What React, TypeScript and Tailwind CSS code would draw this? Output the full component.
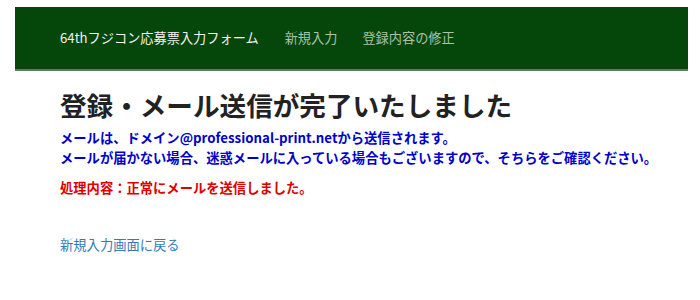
import React from "react";

const font = { fontFamily: '"Noto Sans CJK JP", "Noto Sans", sans-serif' };

function Navbar() {
  return (
    <nav className="ml-[15px] mr-[12px] mt-[7px] flex h-[64px] items-center border-b-2 border-[#5f7a5f] bg-[#05470a] pl-[45px]">
      <a className="text-[13.2px] text-[#f2f2f2]">64thフジコン応募票入力フォーム</a>
      <ul className="ml-[26px] flex gap-[25px] text-[13.2px] text-[#a9c2a9]">
        <li>新規入力</li>
        <li>登録内容の修正</li>
      </ul>
    </nav>
  );
}

export default function App() {
  return (
    <div className="h-[300px] w-[700px] bg-white" style={font}>
      <Navbar />
      <main className="pl-[60px] pt-[16px]">
        <h1 className="text-[26.6px] font-bold leading-[36px] text-[#222]">
          登録・メール送信が完了いたしました
        </h1>
        <div className="mt-[5px] text-[13.3px] font-bold leading-[20px] text-[#0000cc]">
          <p>メールは、ドメイン@professional-print.netから送信されます。</p>
          <p>メールが届かない場合、迷惑メールに入っている場合もございますので、そちらをご確認ください。</p>
        </div>
        <p className="mt-[10px] text-[13.3px] font-bold leading-[20px] text-[#dd0000]">
          処理内容：正常にメールを送信しました。
        </p>
        <a className="mt-[37px] block text-[13.3px] leading-[20px] text-[#337ab7]">新規入力画面に戻る</a>
      </main>
    </div>
  );
}
